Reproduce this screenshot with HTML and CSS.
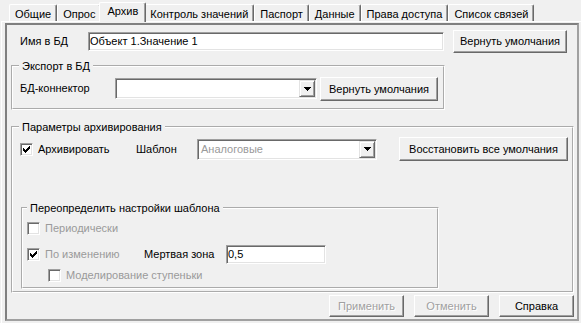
FILE: index.html
```html
<!DOCTYPE html>
<html lang="ru">
<head>
<meta charset="utf-8">
<title>Архив</title>
<link rel="stylesheet" href="styles.css">
</head>
<body>
<div class="tabs">
  <div class="tab">Общие</div>
  <div class="tab">Опрос</div>
  <div class="tab active">Архив</div>
  <div class="tab">Контроль значений</div>
  <div class="tab">Паспорт</div>
  <div class="tab">Данные</div>
  <div class="tab">Права доступа</div>
  <div class="tab">Список связей</div>
</div>
<div class="sheet">
  <div class="frame">
    <div class="row name-row">
      <span class="lbl lbl-name">Имя в БД</span>
      <div class="edit name-edit">Объект 1.Значение 1</div>
      <button class="btn btn-top">Вернуть умолчания</button>
    </div>

    <fieldset class="group export">
      <legend>Экспорт в БД</legend>
      <div class="row export-row">
        <span class="lbl lbl-conn">БД-коннектор</span>
        <div class="combo conn-combo">
          <span class="combo-text"></span>
          <span class="drop"><svg width="7" height="4" viewBox="0 0 7 4" shape-rendering="crispEdges"><path d="M0 0h7v1h-7z M1 1h5v1h-5z M2 2h3v1h-3z M3 3h1v1h-1z" fill="#000"/></svg></span>
        </div>
        <button class="btn btn-export">Вернуть умолчания</button>
      </div>
    </fieldset>

    <fieldset class="group params">
      <legend>Параметры архивирования</legend>
      <div class="row params-row">
        <div class="check chk-arch">
          <span class="box"><svg width="7" height="7" viewBox="0 0 7 7" shape-rendering="crispEdges"><path d="M6 0h1v1h-1z M5 1h2v1h-2z M0 2h1v1h-1z M4 2h3v1h-3z M0 3h2v1h-2z M3 3h3v1h-3z M0 4h5v1h-5z M1 5h3v1h-3z M2 6h1v1h-1z" fill="#000"/></svg></span>
          <span>Архивировать</span>
        </div>
        <span class="lbl lbl-tpl">Шаблон</span>
        <div class="combo tpl-combo">
          <span class="combo-text muted">Аналоговые</span>
          <span class="drop"><svg width="7" height="4" viewBox="0 0 7 4" shape-rendering="crispEdges"><path d="M0 0h7v1h-7z M1 1h5v1h-5z M2 2h3v1h-3z M3 3h1v1h-1z" fill="#000"/></svg></span>
        </div>
        <button class="btn btn-restore">Восстановить все умолчания</button>
      </div>

      <fieldset class="group override">
        <legend>Переопределить настройки шаблона</legend>
        <div class="row ov-row ov-a">
          <div class="check dis">
            <span class="box"></span>
            <span>Периодически</span>
          </div>
        </div>
        <div class="row ov-b">
          <div class="check dis chk-change">
            <span class="box"><svg width="7" height="7" viewBox="0 0 7 7" shape-rendering="crispEdges"><path d="M6 0h1v1h-1z M5 1h2v1h-2z M0 2h1v1h-1z M4 2h3v1h-3z M0 3h2v1h-2z M3 3h3v1h-3z M0 4h5v1h-5z M1 5h3v1h-3z M2 6h1v1h-1z" fill="#000"/></svg></span>
            <span>По изменению</span>
          </div>
          <span class="lbl lbl-dead">Мертвая зона</span>
          <div class="edit dead-edit">0,5</div>
        </div>
        <div class="row ov-row ov-c">
          <div class="check dis">
            <span class="box"></span>
            <span>Моделирование ступеньки</span>
          </div>
        </div>
      </fieldset>
    </fieldset>

    <div class="footer">
      <button class="btn btn-foot" disabled>Применить</button>
      <button class="btn btn-foot" disabled>Отменить</button>
      <button class="btn btn-foot">Справка</button>
    </div>
  </div>
</div>
</body>
</html>
```

FILE: styles.css
```css
* { box-sizing: border-box; }

html, body { margin: 0; padding: 0; }

body {
  width: 581px;
  height: 323px;
  overflow: hidden;
  background: #f0f0f0;
  font-family: "Liberation Sans", Arial, sans-serif;
  font-size: 11px;
  line-height: 13px;
  color: #000;
}

/* ---------- tabs ---------- */
.tabs {
  display: flex;
  align-items: flex-end;
  height: 21px;
  padding-left: 9px;
  position: relative;
  z-index: 2;
}

.tab {
  height: 17px;
  padding: 3px 5px 0;
  border-top: 1px solid #fff;
  border-left: 1px solid #fff;
  border-right: 1px solid #696969;
  box-shadow: inset -1px 0 0 #a0a0a0;
  border-radius: 2px 2px 0 0;
  background: #f0f0f0;
  white-space: nowrap;
}

.tab.active {
  position: relative;
  z-index: 1;
  height: 20px;
  margin: 0 -2px -1px;
  padding: 2px 7px 0;
}

/* ---------- sheet and frame ---------- */
.sheet {
  height: 302px;
  margin-left: 1px;
  border-top: 1px solid #fff;
  border-left: 1px solid #fff;
  padding: 1px 2px 0 3px;
}

.frame {
  height: 298px;
  border: 2px solid;
  border-color: #808080 #a0a0a0 #a0a0a0 #808080;
}

/* ---------- generic ---------- */
.row {
  display: flex;
  align-items: center;
}

.lbl { white-space: nowrap; }

.edit {
  height: 19px;
  background: #fff;
  border: 1px solid;
  border-color: #a0a0a0 #fff #fff #a0a0a0;
  box-shadow: inset 1px 1px 0 #696969, inset -1px -1px 0 #e3e3e3;
  padding: 0 2px;
  line-height: 17px;
  white-space: nowrap;
}

.combo {
  height: 21px;
  display: flex;
  background: #fff;
  border: 1px solid;
  border-color: #a0a0a0 #fff #fff #a0a0a0;
  box-shadow: inset 1px 1px 0 #696969, inset -1px -1px 0 #e3e3e3;
  padding: 1px;
}

.combo-text {
  flex: 1;
  padding-left: 2px;
  line-height: 17px;
  white-space: nowrap;
}

.muted { color: #9a9a9a; }

.drop {
  width: 16px;
  height: 17px;
  display: flex;
  align-items: center;
  justify-content: center;
  background: #f0f0f0;
  border: 1px solid;
  border-color: #e3e3e3 #696969 #696969 #e3e3e3;
  box-shadow: inset 1px 1px 0 #fff, inset -1px -1px 0 #a0a0a0;
}

.btn {
  font: inherit;
  line-height: 13px;
  color: #000;
  background: #f0f0f0;
  margin: 0;
  padding: 0;
  border: 1px solid;
  border-color: #fff #696969 #696969 #fff;
  box-shadow: inset -1px -1px 0 #a0a0a0;
  text-align: center;
  white-space: nowrap;
}

.btn:disabled {
  color: #a0a0a0;
  text-shadow: 1px 1px 0 #fff;
}

.check {
  display: flex;
  align-items: center;
  gap: 5px;
  white-space: nowrap;
}

.check.dis { color: #9a9a9a; }

.box {
  width: 13px;
  height: 13px;
  flex: none;
  display: flex;
  align-items: center;
  justify-content: center;
  background: #fff;
  border: 1px solid;
  border-color: #a0a0a0 #fff #fff #a0a0a0;
  box-shadow: inset 1px 1px 0 #696969, inset -1px -1px 0 #e3e3e3;
}

/* ---------- group boxes ---------- */
.group {
  margin: 0;
  padding: 0;
  min-width: 0;
  border: 2px groove #fff;
}

.group legend {
  padding: 0 3px;
  margin-left: 6px;
  line-height: 14px;
  white-space: nowrap;
}

/* ---------- name row ---------- */
.name-row {
  height: 23px;
  margin-top: 5px;
  padding-left: 13px;
}
.lbl-name { width: 68px; }
.name-edit { width: 356px; padding-left: 1px; }
.btn-top { width: 114px; height: 23px; margin-left: 9px; }

/* ---------- export ---------- */
.export {
  width: 434px;
  margin: 6px 0 0 4px;
  padding-bottom: 7px;
}
.export-row {
  height: 24px;
  margin-top: 4px;
  padding-left: 7px;
  align-items: flex-start;
}
.lbl-conn { width: 95px; line-height: 22px; }
.conn-combo { width: 202px; margin-top: 1px; }
.btn-export { width: 118px; height: 24px; margin-left: 3px; }

/* ---------- params ---------- */
.params {
  width: 563px;
  margin: 10px 0 0 4px;
  padding-bottom: 1px;
}
.params-row {
  height: 24px;
  margin-top: 3px;
  padding-left: 7px;
}
.chk-arch { width: 116px; color: #000; }
.lbl-tpl { width: 61px; }
.tpl-combo { width: 180px; }
.btn-restore { width: 169px; height: 24px; margin-left: 22px; }

.override {
  width: 418px;
  margin: 40px 0 1px 8px;
  padding-bottom: 5px;
}
.override legend { margin-left: 4px; }

.ov-row { height: 13px; }
.ov-a { margin-top: 7px; padding-left: 4px; }
.ov-b { height: 19px; margin-top: 10px; padding-left: 4px; }
.ov-c { margin-top: 5px; padding-left: 25px; }

.chk-change { width: 117px; }
.lbl-dead { width: 82px; }
.dead-edit { width: 100px; padding-left: 1px; }

/* ---------- footer ---------- */
.footer {
  display: flex;
  justify-content: flex-end;
  gap: 10px;
  margin-top: 2px;
  padding-right: 3px;
}
.btn-foot { width: 75px; height: 22px; }
```
